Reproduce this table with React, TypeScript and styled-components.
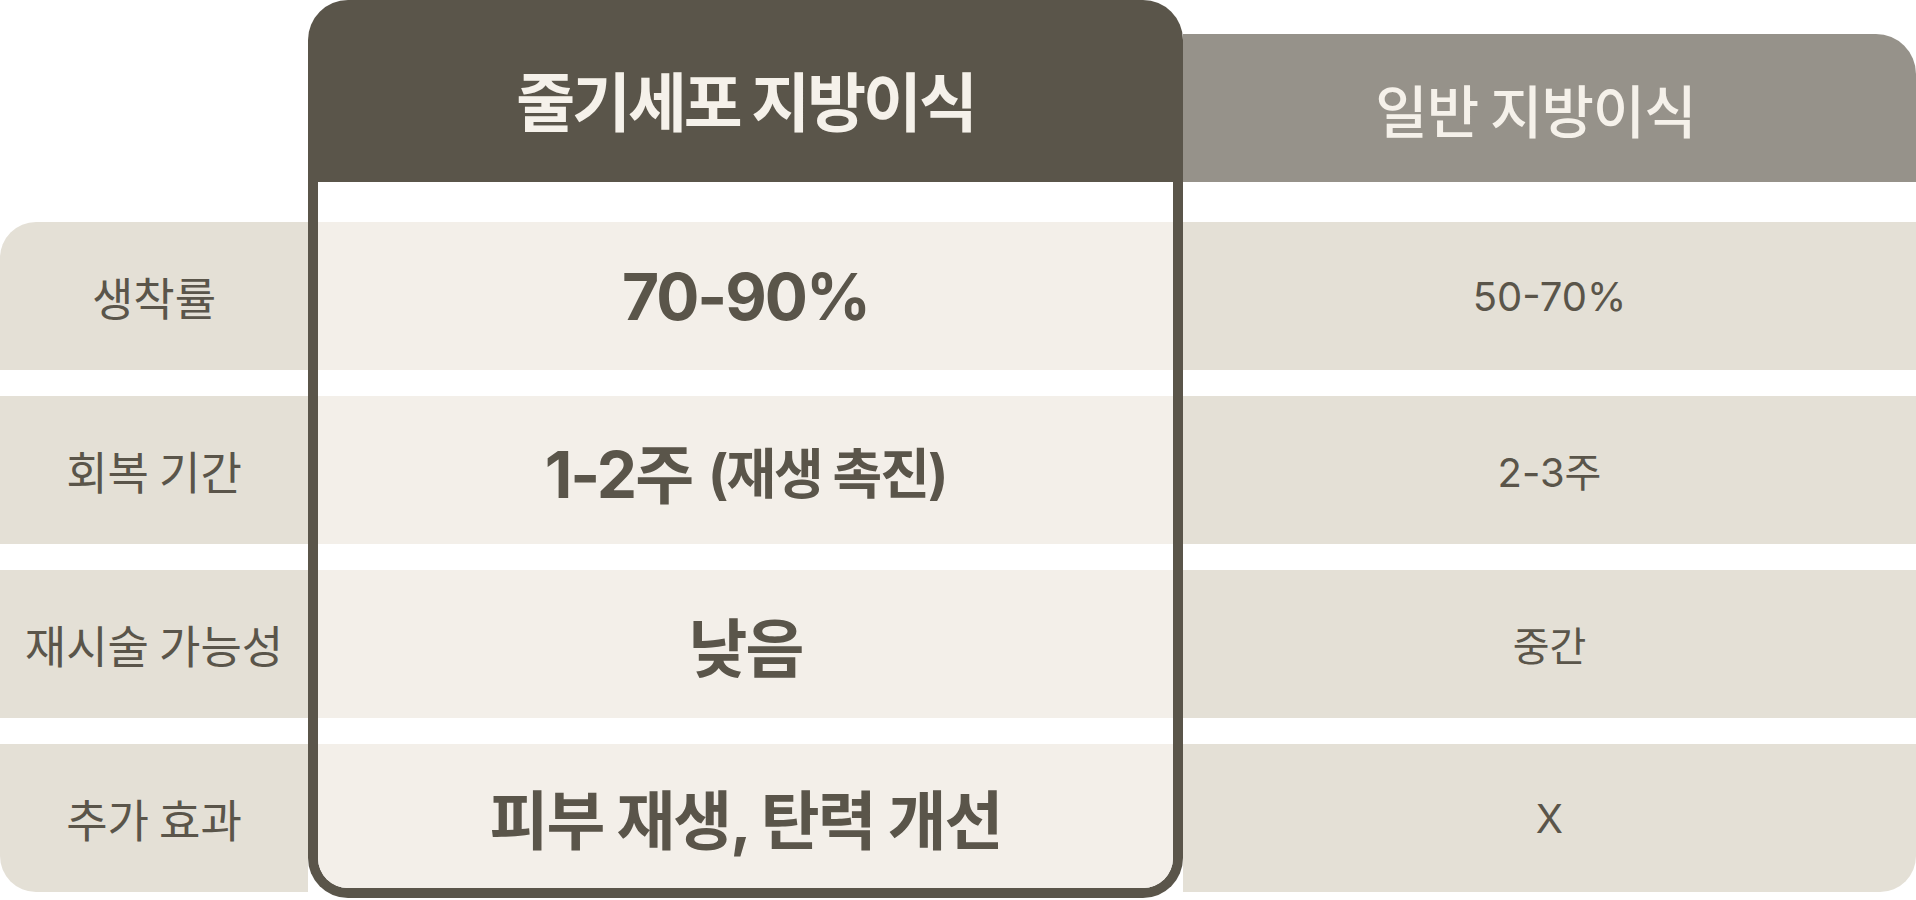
import styled, { createGlobalStyle } from "styled-components";

const GlobalStyle = createGlobalStyle`
  html, body {
    margin: 0;
    padding: 0;
    background: #ffffff;
  }
  body {
    font-family: "Inter", "Noto Sans CJK KR", sans-serif;
    color: #5a554a;
  }
`;

const Page = styled.div`
  display: flex;
  align-items: flex-start;
  width: 1916px;
  height: 900px;
  overflow: hidden;
`;

const LabelColumn = styled.div`
  width: 308px;
  flex-shrink: 0;
  display: flex;
  flex-direction: column;
  gap: 26px;
  padding-top: 222px;
`;

const LabelCell = styled.div<{ $first?: boolean; $last?: boolean }>`
  height: 148px;
  display: flex;
  align-items: center;
  justify-content: center;
  background: #e4e0d6;
  font-family: "Noto Sans CJK KR", sans-serif;
  font-size: 45px;
  font-weight: 400;
  border-top-left-radius: ${(p) => (p.$first ? "36px" : "0")};
  border-bottom-left-radius: ${(p) => (p.$last ? "36px" : "0")};
`;

// highlighted column: dark frame around header and cells
const FeatureCard = styled.div`
  width: 875px;
  flex-shrink: 0;
  box-sizing: border-box;
  padding: 0 10px 10px;
  border-radius: 40px;
  background: #5a554a;
  display: flex;
  flex-direction: column;
`;

const CardHeader = styled.div`
  height: 182px;
  display: flex;
  align-items: center;
  justify-content: center;
  padding-top: 14px;
  box-sizing: border-box;
  color: #f5f1ea;
  font-family: "Noto Sans CJK KR", sans-serif;
  font-size: 64px;
  font-weight: 700;
  letter-spacing: -3px;
`;

const CardBody = styled.div`
  display: flex;
  flex-direction: column;
  gap: 26px;
  padding-top: 40px;
  background: #ffffff;
  border-radius: 0 0 30px 30px;
  overflow: hidden;
`;

const CardCell = styled.div<{ $last?: boolean }>`
  height: ${(p) => (p.$last ? "144px" : "148px")};
  display: flex;
  align-items: center;
  justify-content: center;
  background: #f3efe9;
  font-size: 64px;
  font-weight: 700;
  letter-spacing: -2px;
  white-space: nowrap;
`;

const Small = styled.span`
  font-size: 54px;
  margin-left: 16px;
`;

const OtherColumn = styled.div`
  flex: 1;
  display: flex;
  flex-direction: column;
  padding-top: 34px;
`;

const OtherHeader = styled.div`
  height: 148px;
  display: flex;
  align-items: center;
  justify-content: center;
  padding-right: 28px;
  background: #96928a;
  color: #f5f1ea;
  border-top-right-radius: 40px;
  font-family: "Noto Sans CJK KR", sans-serif;
  font-size: 57px;
  font-weight: 500;
  letter-spacing: -1px;
`;

const OtherBody = styled.div`
  display: flex;
  flex-direction: column;
  gap: 26px;
  padding-top: 40px;
`;

const OtherCell = styled.div<{ $last?: boolean }>`
  height: 148px;
  display: flex;
  align-items: center;
  justify-content: center;
  background: #e4e0d6;
  font-size: 40px;
  font-weight: 400;
  border-bottom-right-radius: ${(p) => (p.$last ? "36px" : "0")};
`;

// Interface of one comparison row
interface compareRow {
  label: string;
  stem: React.ReactNode;
  normal: string;
}

const rows: compareRow[] = [
  { label: "생착률", stem: "70-90%", normal: "50-70%" },
  {
    label: "회복 기간",
    stem: (
      <>
        1-2주<Small>(재생 촉진)</Small>
      </>
    ),
    normal: "2-3주",
  },
  { label: "재시술 가능성", stem: "낮음", normal: "중간" },
  { label: "추가 효과", stem: "피부 재생, 탄력 개선", normal: "X" },
];

export default function App() {
  return (
    <>
      <GlobalStyle />
      <Page>
        <LabelColumn>
          {rows.map((row, idx) => (
            <LabelCell
              key={`label-${idx}`}
              $first={idx === 0}
              $last={idx === rows.length - 1}
            >
              {row.label}
            </LabelCell>
          ))}
        </LabelColumn>

        <FeatureCard>
          <CardHeader>줄기세포 지방이식</CardHeader>
          <CardBody>
            {rows.map((row, idx) => (
              <CardCell key={`stem-${idx}`} $last={idx === rows.length - 1}>
                {row.stem}
              </CardCell>
            ))}
          </CardBody>
        </FeatureCard>

        <OtherColumn>
          <OtherHeader>일반 지방이식</OtherHeader>
          <OtherBody>
            {rows.map((row, idx) => (
              <OtherCell key={`normal-${idx}`} $last={idx === rows.length - 1}>
                {row.normal}
              </OtherCell>
            ))}
          </OtherBody>
        </OtherColumn>
      </Page>
    </>
  );
}
